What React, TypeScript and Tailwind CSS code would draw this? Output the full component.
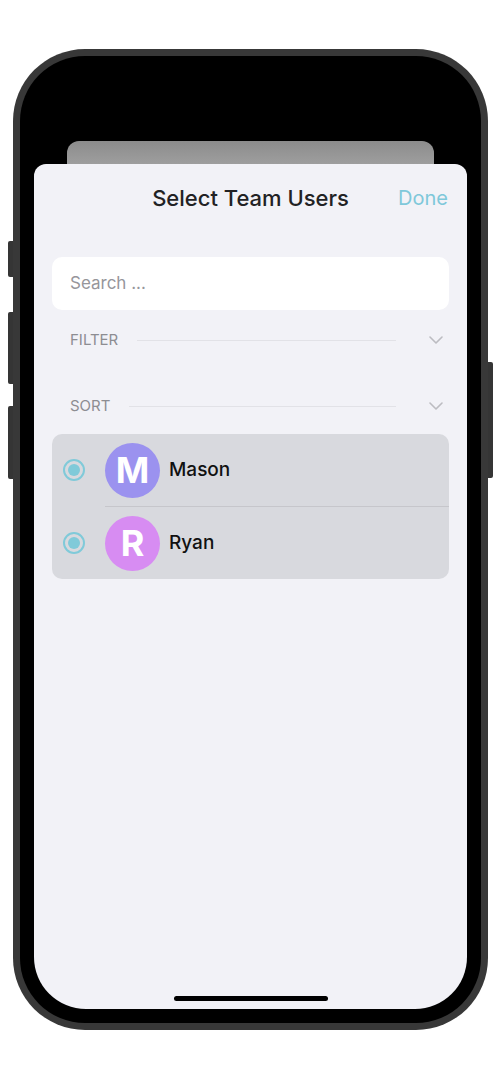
import React from "react";

const users = [
  { name: "Mason", initial: "M", color: "bg-[#9b92ef]" },
  { name: "Ryan", initial: "R", color: "bg-[#d78cf2]" },
];

function Chevron() {
  return (
    <svg width="14" height="8" viewBox="0 0 14 8" fill="none">
      <polyline
        points="1,1 7,7 13,1"
        stroke="#bcbcc1"
        strokeWidth="1.6"
        strokeLinecap="round"
        strokeLinejoin="round"
      />
    </svg>
  );
}

function Radio() {
  return (
    <div className="flex h-[22px] w-[22px] shrink-0 items-center justify-center rounded-full border-[2px] border-[#80cad9]">
      <div className="h-[12px] w-[12px] rounded-full bg-[#80cad9]" />
    </div>
  );
}

function Section({ label }: { label: string }) {
  return (
    <div className="flex h-[24px] items-center pl-[18px] pr-[6px]">
      <span className="text-[15px] text-[#8d8d92]">{label}</span>
      <div className="ml-[19px] h-px flex-1 bg-[#e2e2e7]" />
      <div className="ml-[33px] flex w-[14px] items-center justify-center">
        <Chevron />
      </div>
    </div>
  );
}

export default function App() {
  return (
    <div className="h-[1080px] w-[500px] bg-white font-['Inter',sans-serif]">
      <div className="relative ml-[13px] pt-[49px]">
        {/* side buttons */}
        <div className="absolute left-[-5px] top-[241px] h-[36px] w-[5px] rounded-l-[2px] bg-[#353535]" />
        <div className="absolute left-[-5px] top-[312px] h-[72px] w-[5px] rounded-l-[2px] bg-[#353535]" />
        <div className="absolute left-[-5px] top-[406px] h-[73px] w-[5px] rounded-l-[2px] bg-[#353535]" />
        <div className="absolute left-[475px] top-[362px] h-[116px] w-[5px] rounded-r-[2px] bg-[#353535]" />

        <div className="h-[981px] w-[475px] rounded-[72px] bg-[#383838] p-[7px]">
          <div className="h-full w-full rounded-[65px] bg-black p-[14px]">
            <div className="flex h-full w-full flex-col overflow-hidden rounded-[52px] bg-black pt-[71px]">
              <div className="mx-[33px] h-[23px] shrink-0 rounded-t-[12px] bg-gradient-to-b from-[#8c8c8c] to-[#9e9e9e]" />
              <div className="flex flex-1 flex-col rounded-t-[12px] bg-[#f2f2f7] px-[18px]">
                <div className="grid h-[68px] grid-cols-[1fr_auto_1fr] items-center">
                  <div />
                  <h1 className="text-[22px] font-medium text-[#222224]">
                    Select Team Users
                  </h1>
                  <div className="flex justify-end pr-px">
                    <span className="text-[20px] text-[#7fc8da]">Done</span>
                  </div>
                </div>

                <div className="mt-[25px] flex h-[53px] items-center rounded-[10px] bg-white px-[18px]">
                  <span className="text-[17px] text-[#96969b]">Search ...</span>
                </div>

                <div className="mt-[18px]">
                  <Section label="FILTER" />
                </div>
                <div className="mt-[42px]">
                  <Section label="SORT" />
                </div>

                <div className="mt-[16px] overflow-hidden rounded-[10px] bg-[#d8d9de]">
                  {users.map((u, i) => (
                    <div
                      key={u.name}
                      className={`flex items-center pl-[11px] ${i > 0 ? "h-[73px]" : "h-[72px]"}`}
                    >
                      <Radio />
                      <div
                        className={`ml-[20px] flex h-full flex-1 items-center ${
                          i > 0 ? "border-t border-[#c6c6cb]" : ""
                        }`}
                      >
                        <div
                          className={`flex h-[55px] w-[55px] shrink-0 items-center justify-center rounded-full ${u.color}`}
                        >
                          <span className="text-[36px] font-bold leading-none text-white">
                            {u.initial}
                          </span>
                        </div>
                        <span className="ml-[9px] text-[19px] font-medium text-[#111]">
                          {u.name}
                        </span>
                      </div>
                    </div>
                  ))}
                </div>

                <div className="flex-1" />
                <div className="mb-[8px] flex justify-center">
                  <div className="h-[5px] w-[154px] rounded-full bg-black" />
                </div>
              </div>
            </div>
          </div>
        </div>
      </div>
    </div>
  );
}
